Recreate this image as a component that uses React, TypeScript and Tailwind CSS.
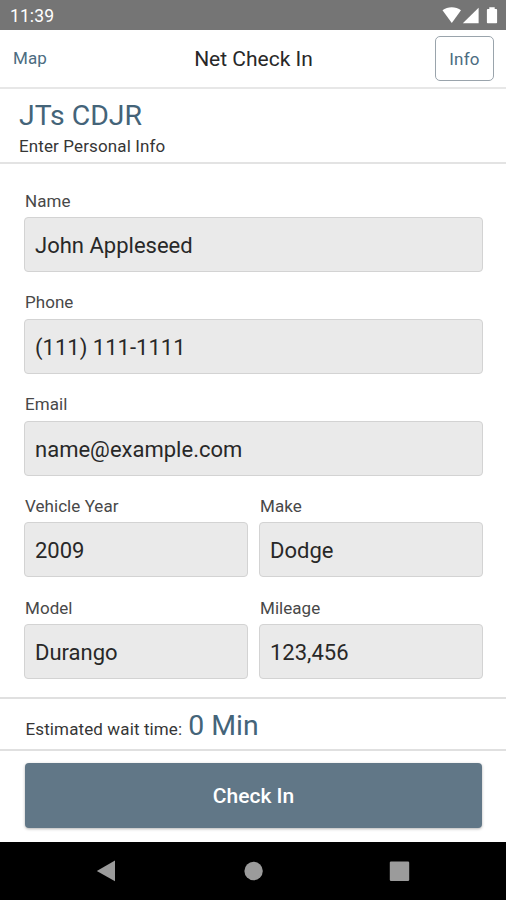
import { clsx } from 'clsx'

type FieldProps = { label: string; value: string; className?: string }

const Field = ({ label, value, className }: FieldProps) => (
  <div className={clsx('flex min-w-0 flex-col', className)}>
    <span className="mb-[5.5px] pl-px text-[17px] leading-[22px] tracking-[0.05px] text-[#484848]">{label}</span>
    <div className="flex h-[55px] items-center rounded-[4px] border border-[#d3d3d3] bg-[#eaeaea] pt-[2px] pl-[10px] text-[22px] tracking-[0.01px] text-[#282828]">
      {value}
    </div>
  </div>
)

const StatusBar = () => (
  <div className="flex h-[30px] items-center justify-between bg-[#757575] pr-[8px] pl-[10px] text-white">
    <span className="pt-[2px] text-[17.5px] tracking-[0.1px]">11:39</span>
    <svg width="56" height="18" viewBox="0 0 56 18" fill="currentColor">
      <path d="M0.5 4.2C5.5 0.3 14 0.3 19 4.2L9.8 17Z" />
      <path d="M36.6 1.8V17.3H20.8Z" />
      <path d="M47.3 1.3h5.4v1.8h1.6q.8 0 .8.8v12.6q0 .8-.8.8h-8.6q-.8 0-.8-.8V3.9q0-.8.8-.8h1.6z" />
    </svg>
  </div>
)

const NavBar = () => (
  <div className="h-[58px] bg-black">
    <svg width="506" height="58" viewBox="0 0 506 58" fill="#9b9b9b">
      <path d="M96.8 29L115 18.5V39.2Z" />
      <circle cx="253.6" cy="29" r="9.2" />
      <rect x="389.8" y="19.6" width="19.4" height="19.4" rx="1.2" />
    </svg>
  </div>
)

export default function App() {
  return (
    <div className="flex h-[900px] w-[506px] flex-col overflow-hidden bg-white font-[Roboto,sans-serif]">
      <StatusBar />

      {/* Header */}
      <header className="grid h-[59px] grid-cols-3 items-center border-b-2 border-[#e7e7e7] pr-[12px] pl-[13px]">
        <a className="text-[17px] tracking-[0.1px] text-[#4c6c81]">Map</a>
        <h1 className="pt-[2px] text-center text-[21px] whitespace-nowrap text-[#282828]">Net Check In</h1>
        <button className="h-[45px] w-[59px] justify-self-end rounded-[5px] border border-[#9aa4ac] pt-[2px] text-[17px] tracking-[0.2px] text-[#4c6c81]">
          Info
        </button>
      </header>

      <section className="h-[75px] border-b-2 border-[#e3e3e3] pt-[9px] pl-[19px]">
        <h2 className="text-[28.4px] leading-[36px] text-[#446479]">JTs CDJR</h2>
        <p className="pt-px text-[17px] leading-[22px] tracking-[0.12px] text-[#363636]">Enter Personal Info</p>
      </section>

      <form className="grid h-[533px] grid-cols-2 content-start gap-x-[11px] gap-y-[19.25px] pt-[25.5px] pr-[23px] pl-[24px]">
        <Field className="col-span-2" label="Name" value="John Appleseed" />
        <Field className="col-span-2" label="Phone" value="(111) 111-1111" />
        <Field className="col-span-2" label="Email" value="name@example.com" />
        <Field label="Vehicle Year" value="2009" />
        <Field label="Make" value="Dodge" />
        <Field label="Model" value="Durango" />
        <Field label="Mileage" value="123,456" />
      </form>

      <section className="flex h-[54px] items-baseline gap-[6px] border-y-2 border-[#e0e0e0] pt-[9px] pl-[25.5px]">
        <span className="text-[17px] tracking-[0.12px] text-[#363636]">Estimated wait time:</span>
        <span className="text-[28.4px] leading-[36px] text-[#446479]">0 Min</span>
      </section>

      <div className="flex-1 px-[24.5px] pt-[12px]">
        <button className="h-[65px] w-full rounded-[4px] bg-[#617787] pt-[3px] pl-px text-[21px] font-medium text-white shadow-[0_1px_3px_rgba(0,0,0,0.3)]">
          Check In
        </button>
      </div>

      <NavBar />
    </div>
  )
}
